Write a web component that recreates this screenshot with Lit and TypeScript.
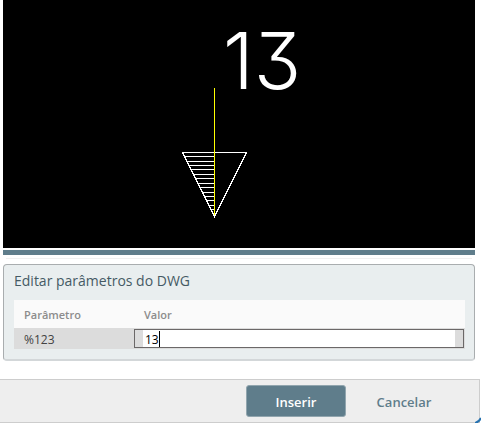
import { LitElement, html, svg, css } from "lit";
import { customElement, state } from "lit/decorators.js";

const HATCH_ROWS = [156, 161, 165, 169, 174, 178, 183, 187, 192, 196, 200, 205, 209];

@customElement("dwg-preview")
class DwgPreview extends LitElement {
  static properties = { label: { type: String } };
  declare label: string;

  static styles = css`
    :host { display: block; background: #000; }
    .drawing { display: block; width: 100%; height: 248px; }
    .white { stroke: #fff; fill: none; stroke-width: 1; shape-rendering: crispEdges; }
    .axis { stroke: #ff0; stroke-width: 1; shape-rendering: crispEdges; }
    .label {
      fill: #fff;
      font-family: Inter, "Open Sans", sans-serif;
      font-size: 78px;
      font-weight: 300;
      font-feature-settings: "cv09" 1;
    }
  `;

  render() {
    return html`
      <svg class="drawing" viewBox="3 0 472 248" role="img" aria-label="Pré-visualização">
        <path class="white" d="M182.5 152.5H246.5L214.5 216.5Z" />
        ${HATCH_ROWS.map(
          (y) => svg`<path class="white" d="M${182.5 + (y - 152) / 2} ${y + 0.5}H214.5" />`
        )}
        <path class="axis" d="M214.5 88V215" />
        <text class="label" x="223" y="89">${this.label}</text>
      </svg>
    `;
  }
}

@customElement("app-root")
class AppRoot extends LitElement {
  @state() value = "13";

  static styles = css`
    :host {
      display: block;
      background: #fff;
      color: #455560;
      font-family: "Segoe UI", "Open Sans", "Noto Sans", sans-serif;
      font-size: 12px;
    }
    * { box-sizing: border-box; }
    .content { padding: 0 6px 18px 3px; }
    .splitter { height: 5px; margin-top: 2px; background: #5f7d8b; }
    .rule { height: 1px; margin: 3px 3px 5px; background: #f0f0f0; }
    .panel {
      padding: 0 9px 10px 10px;
      border: 1px solid #a9adaf;
      border-bottom: 2px solid #d3d7d9;
      border-radius: 4px;
      background: #e9eeef;
    }
    .title {
      margin: 0;
      padding-top: 5px;
      height: 35px;
      font-size: 14px;
      font-weight: 400;
      line-height: 22px;
      color: #455a64;
    }
    .params { width: 100%; border-collapse: collapse; table-layout: fixed; }
    .name-col { width: 120px; }
    th {
      height: 28px;
      padding: 2px 10px 0;
      background: #fafafa;
      color: #8c8c8c;
      font-size: 11px;
      font-weight: 600;
      line-height: 16px;
      text-align: left;
    }
    td { height: 21px; padding: 0; background: #dcdcdc; color: #424242; }
    .name { padding: 2px 10px 0; line-height: 16px; }
    .editor {
      position: relative;
      height: 19px;
      margin-right: 1px;
      padding: 0 8px;
      border: 1px solid #6b6868;
    }
    .field {
      display: block;
      width: 100%;
      height: 17px;
      padding: 2px 0 0 2px;
      border: 0;
      border-radius: 0;
      outline: 0;
      background: #fff;
      color: #000;
      font: inherit;
    }
    .caret { position: absolute; top: 1px; left: 24px; width: 1px; height: 16px; background: #000; }
    .footer {
      display: flex;
      justify-content: flex-end;
      gap: 8px;
      height: 44px;
      margin-right: 1px;
      padding: 5px 25px 5px 0;
      border: 1px solid #cdcdcd;
      border-left: 0;
      background: #eee;
      position: relative;
    }
    .button {
      width: 100px;
      height: 32px;
      padding: 2px 0 0;
      border: 1px solid transparent;
      border-radius: 3px;
      background: transparent;
      color: #5f7d8b;
      font: inherit;
      font-size: 13px;
      font-weight: 600;
    }
    .primary { border-color: #91a5ae; background: #5f7d8b; color: #fff; }
    .grip { position: absolute; right: -2px; bottom: -1px; width: 6px; height: 6px; }
    .grip path { fill: none; stroke: #2672b0; stroke-width: 2; }
  `;

  private onInput(e: Event) {
    this.value = (e.target as HTMLInputElement).value;
  }

  render() {
    return html`
      <main class="content">
        <dwg-preview .label=${this.value}></dwg-preview>
        <div class="splitter"></div>
        <div class="rule"></div>
        <section class="panel">
          <h2 class="title">Editar parâmetros do DWG</h2>
          <table class="params">
            <colgroup><col class="name-col" /><col /></colgroup>
            <thead><tr><th scope="col">Parâmetro</th><th scope="col">Valor</th></tr></thead>
            <tbody>
              <tr>
                <td class="name"><label for="value">%123</label></td>
                <td>
                  <div class="editor">
                    <input id="value" class="field" type="text" .value=${this.value} @input=${this.onInput} />
                    <span class="caret"></span>
                  </div>
                </td>
              </tr>
            </tbody>
          </table>
        </section>
      </main>
      <footer class="footer">
        <button class="button primary" type="button">Inserir</button>
        <button class="button" type="button">Cancelar</button>
        <svg class="grip" viewBox="0 0 6 6" aria-hidden="true"><path d="M0 6Q4 5 6 1" /></svg>
      </footer>
    `;
  }
}
